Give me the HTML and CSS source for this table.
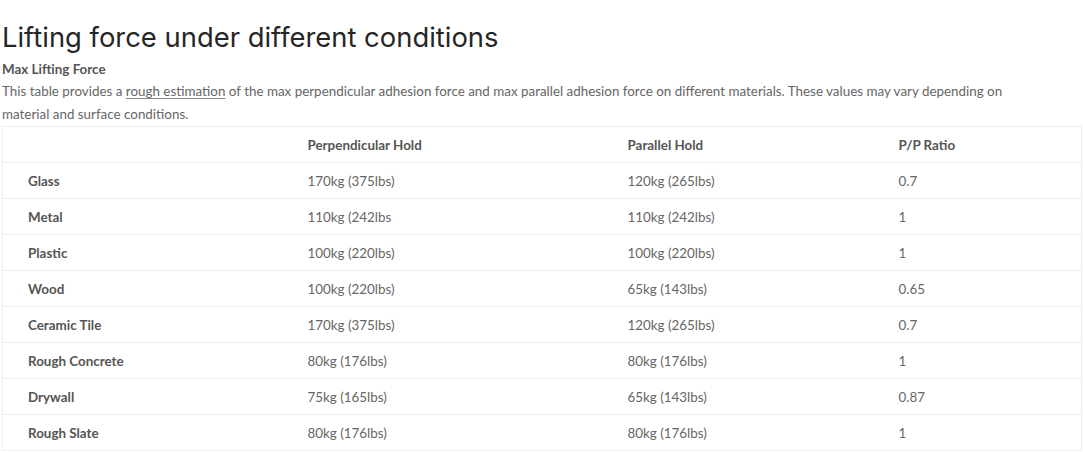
FILE: index.html
```html
<!DOCTYPE html>
<html lang="en">
<head>
<meta charset="utf-8">
<title>Lifting force</title>
<link rel="stylesheet" href="styles.css">
</head>
<body>
<main class="page">
  <h2 class="title">Lifting force under different conditions</h2>
  <h4 class="subtitle">Max Lifting Force</h4>
  <p class="desc">This table provides a <u class="ul">rough estimation</u> of the max perpendicular adhesion force and max parallel adhesion force on different materials. These values may vary depending on material and surface conditions.</p>
  <table class="force">
    <colgroup>
      <col class="c1"><col class="c2"><col class="c3"><col class="c4">
    </colgroup>
    <thead>
      <tr><th></th><th>Perpendicular Hold</th><th>Parallel Hold</th><th>P/P Ratio</th></tr>
    </thead>
    <tbody>
      <tr><th>Glass</th><td>170kg (375lbs)</td><td>120kg (265lbs)</td><td>0.7</td></tr>
      <tr><th>Metal</th><td>110kg (242lbs</td><td>110kg (242lbs)</td><td>1</td></tr>
      <tr><th>Plastic</th><td>100kg (220lbs)</td><td>100kg (220lbs)</td><td>1</td></tr>
      <tr><th>Wood</th><td>100kg (220lbs)</td><td>65kg (143lbs)</td><td>0.65</td></tr>
      <tr><th>Ceramic Tile</th><td>170kg (375lbs)</td><td>120kg (265lbs)</td><td>0.7</td></tr>
      <tr><th>Rough Concrete</th><td>80kg (176lbs)</td><td>80kg (176lbs)</td><td>1</td></tr>
      <tr><th>Drywall</th><td>75kg (165lbs)</td><td>65kg (143lbs)</td><td>0.87</td></tr>
      <tr><th>Rough Slate</th><td>80kg (176lbs)</td><td>80kg (176lbs)</td><td>1</td></tr>
    </tbody>
  </table>
</main>
</body>
</html>
```
FILE: styles.css
```css
html, body {
  margin: 0;
  padding: 0;
  background: #fff;
}
.page {
  padding: 0 2px;
  font-family: Lato, "Noto Sans", sans-serif;
  color: #666;
  font-size: 13.4px;
}
.title {
  margin: 0;
  padding-top: 19px;
  font-family: Inter, "Noto Sans", sans-serif;
  font-weight: 400;
  font-size: 27.4px;
  line-height: 36px;
  color: #262626;
}
.subtitle {
  margin: 4px 0 0;
  font-size: 13.4px;
  line-height: 20px;
  font-weight: 700;
  color: #555;
}
.desc {
  margin: 1px 0 0;
  max-width: 1045px;
  line-height: 23px;
  color: #666;
}
.ul {
  text-decoration-color: #888;
  text-underline-offset: 2px;
}
.force {
  width: 1079px;
  table-layout: fixed;
  border-collapse: collapse;
  border: 1px solid #eee;
  margin-top: 0;
}
.c1 { width: 297px; }
.c2 { width: 320px; }
.c3 { width: 271px; }
.c4 { width: 191px; }
.force th,
.force td {
  height: 35px;
  padding: 0 8px;
  text-align: left;
  border-top: 1px solid #eee;
  font-size: 13.4px;
}
.force th {
  font-weight: 700;
  color: #555;
}
.force tbody th {
  padding-left: 25px;
}
.force td {
  color: #666;
}
```
